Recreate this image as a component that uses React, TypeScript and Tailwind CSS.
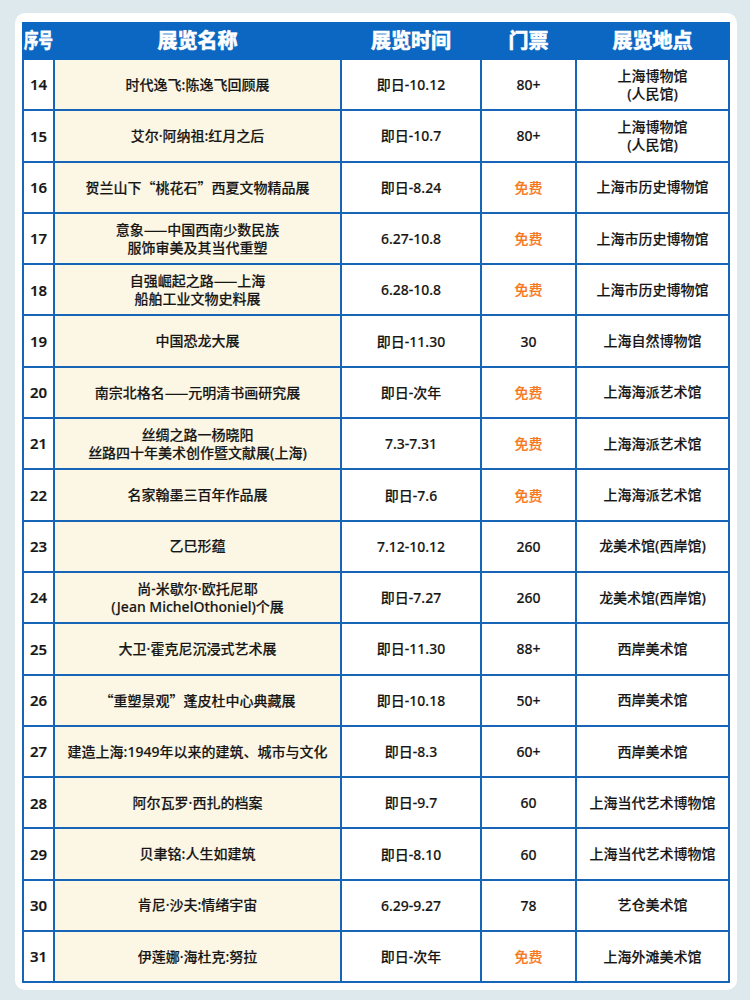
import React from "react";

type Row = {
  no: number;
  name: string[];
  time: string;
  ticket: string;
  place: string[];
};

const rows: Row[] = [
  { no: 14, name: ["时代逸飞:陈逸飞回顾展"], time: "即日-10.12", ticket: "80+", place: ["上海博物馆", "(人民馆)"] },
  { no: 15, name: ["艾尔·阿纳祖:红月之后"], time: "即日-10.7", ticket: "80+", place: ["上海博物馆", "(人民馆)"] },
  { no: 16, name: ["贺兰山下“桃花石”西夏文物精品展"], time: "即日-8.24", ticket: "免费", place: ["上海市历史博物馆"] },
  { no: 17, name: ["意象——中国西南少数民族", "服饰审美及其当代重塑"], time: "6.27-10.8", ticket: "免费", place: ["上海市历史博物馆"] },
  { no: 18, name: ["自强崛起之路——上海", "船舶工业文物史料展"], time: "6.28-10.8", ticket: "免费", place: ["上海市历史博物馆"] },
  { no: 19, name: ["中国恐龙大展"], time: "即日-11.30", ticket: "30", place: ["上海自然博物馆"] },
  { no: 20, name: ["南宗北格名——元明清书画研究展"], time: "即日-次年", ticket: "免费", place: ["上海海派艺术馆"] },
  { no: 21, name: ["丝绸之路一杨晓阳", "丝路四十年美术创作暨文献展(上海)"], time: "7.3-7.31", ticket: "免费", place: ["上海海派艺术馆"] },
  { no: 22, name: ["名家翰墨三百年作品展"], time: "即日-7.6", ticket: "免费", place: ["上海海派艺术馆"] },
  { no: 23, name: ["乙巳形蕴"], time: "7.12-10.12", ticket: "260", place: ["龙美术馆(西岸馆)"] },
  { no: 24, name: ["尚-米歇尔·欧托尼耶", "(Jean MichelOthoniel)个展"], time: "即日-7.27", ticket: "260", place: ["龙美术馆(西岸馆)"] },
  { no: 25, name: ["大卫·霍克尼沉浸式艺术展"], time: "即日-11.30", ticket: "88+", place: ["西岸美术馆"] },
  { no: 26, name: ["“重塑景观”蓬皮杜中心典藏展"], time: "即日-10.18", ticket: "50+", place: ["西岸美术馆"] },
  { no: 27, name: ["建造上海:1949年以来的建筑、城市与文化"], time: "即日-8.3", ticket: "60+", place: ["西岸美术馆"] },
  { no: 28, name: ["阿尔瓦罗·西扎的档案"], time: "即日-9.7", ticket: "60", place: ["上海当代艺术博物馆"] },
  { no: 29, name: ["贝聿铭:人生如建筑"], time: "即日-8.10", ticket: "60", place: ["上海当代艺术博物馆"] },
  { no: 30, name: ["肯尼·沙夫:情绪宇宙"], time: "6.29-9.27", ticket: "78", place: ["艺仓美术馆"] },
  { no: 31, name: ["伊莲娜·海杜克:努拉"], time: "即日-次年", ticket: "免费", place: ["上海外滩美术馆"] },
];

// quotes and dashes look right only in the CJK face
const Text: React.FC<{ s: string }> = ({ s }) => (
  <>
    {s.split(/([“”—]+)/).map((p, i) =>
      /^[“”—]+$/.test(p) ? (
        <span key={i} className="font-['Noto_Sans_CJK_SC',sans-serif]">{p}</span>
      ) : (
        <React.Fragment key={i}>{p}</React.Fragment>
      )
    )}
  </>
);

const Lines: React.FC<{ lines: string[] }> = ({ lines }) => (
  <div className="flex flex-col items-center leading-[18px]">
    {lines.map((l) => (
      <span key={l} className="whitespace-nowrap">
        <Text s={l} />
      </span>
    ))}
  </div>
);

export default function App() {
  const cell = "border-2 border-[#1665b6] text-center align-middle px-0";
  return (
    <div
      className="w-[750px] h-[1000px] bg-[#dde9ec] pt-[13px] pl-[15px]"
      style={{ fontFamily: '"Noto Sans", "Noto Sans CJK SC", sans-serif' }}
    >
      <div className="w-[722px] h-[977px] bg-white rounded-[10px] pt-[9px] pl-[7px]">
        <table className="table-fixed border-collapse w-[706px] text-[14px] font-medium text-[#161616] [-webkit-text-stroke:0.15px_#161616]">
          <colgroup>
            <col className="w-[31px]" />
            <col className="w-[287px]" />
            <col className="w-[140px]" />
            <col className="w-[95px]" />
            <col className="w-[153px]" />
          </colgroup>
          <thead>
            <tr className="h-[36px] bg-[#0c67c3] text-white font-black text-[20px] [-webkit-text-stroke:0.7px_white]">
              <th className="border-2 border-[#0c67c3] p-0 text-left">
                <span className="inline-block scale-x-[0.72] origin-left whitespace-nowrap">序号</span>
              </th>
              <th className="border-2 border-[#0c67c3] p-0">展览名称</th>
              <th className="border-2 border-[#0c67c3] p-0">展览时间</th>
              <th className="border-2 border-[#0c67c3] p-0">门票</th>
              <th className="border-2 border-[#0c67c3] p-0">展览地点</th>
            </tr>
          </thead>
          <tbody>
            {rows.map((r) => (
              <tr key={r.no} className="h-[51.3px]">
                <td className={cell + " font-semibold text-[15px]"}>{r.no}</td>
                <td className={cell + " bg-[#fcf6e4]"}>
                  <Lines lines={r.name} />
                </td>
                <td className={cell}>{r.time}</td>
                <td
                  className={
                    cell +
                    (r.ticket === "免费" ? " text-[#f7791e] [-webkit-text-stroke:0.15px_#f7791e]" : "")
                  }
                >
                  {r.ticket}
                </td>
                <td className={cell}>
                  <Lines lines={r.place} />
                </td>
              </tr>
            ))}
          </tbody>
        </table>
      </div>
    </div>
  );
}
